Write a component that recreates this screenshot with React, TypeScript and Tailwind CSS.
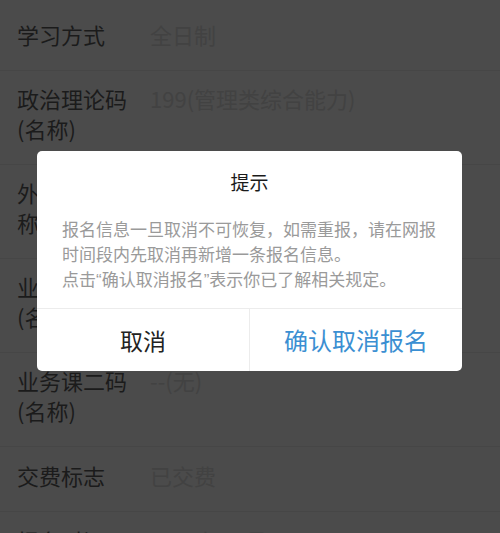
import React from 'react';

const rows: { label: string[]; value: string }[] = [
  { label: ['学习方式'], value: '全日制' },
  { label: ['政治理论码', '(名称)'], value: '199(管理类综合能力)' },
  { label: ['外国语码(名', '称)'], value: '204(英语二)' },
  { label: ['业务课一码', '(名称)'], value: '--(无)' },
  { label: ['业务课二码', '(名称)'], value: '--(无)' },
  { label: ['交费标志'], value: '已交费' },
  { label: ['报名时间'], value: '2017年10月10日' },
];

const font = { fontFamily: '"Noto Sans CJK SC", "Noto Sans", sans-serif' };
const latin = { fontFamily: '"Liberation Sans", sans-serif' };

const App: React.FC = () => {
  return (
    <div className="relative w-[500px] h-[533px] overflow-hidden bg-[#4b4b4b]" style={font}>
      {/* Info list behind the mask */}
      <div className="pt-[6px]">
        {rows.map((row, i) => (
          <div
            key={i}
            className={`flex items-start min-h-[65px] pl-[17px] border-b border-[#464646] ${
              row.label.length > 1 ? 'pt-[12px] pb-[21px]' : 'pt-[13px] pb-[21px]'
            }`}
          >
            <div className="w-[133px] shrink-0 text-[22px] leading-[30px] text-[#1b1b1b]">
              {row.label.map((l, j) => (
                <div key={j}>{l}</div>
              ))}
            </div>
            <div className="text-[22px] leading-[30px] text-[#424242]">{row.value}</div>
          </div>
        ))}
      </div>

      {/* Dialog */}
      <div className="absolute left-[37px] top-[151px] w-[425px] bg-white rounded-[5px]">
        <div className="pt-[18px] text-center text-[19px] leading-[26px] text-[#1a1a1a]">提示</div>
        <div className="pt-[21px] pb-[15px] pl-[25px] pr-[20px] text-[17px] leading-[25px] text-[#9a9a9a]">
          <p>报名信息一旦取消不可恢复，如需重报，请在网报时间段内先取消再新增一条报名信息。</p>
          <p>
            点击<span style={latin}>“</span>确认取消报名<span style={latin}>”</span>表示你已了解相关规定。
          </p>
        </div>
        <div className="flex h-[63px] border-t border-[#ececec]">
          <button className="flex-1 flex items-center justify-center text-[23px] text-[#222] border-r border-[#ececec]">
            取消
          </button>
          <button className="flex-1 flex items-center justify-center text-[24px] text-[#3b8fd2]">
            确认取消报名
          </button>
        </div>
      </div>
    </div>
  );
};

export default App;
